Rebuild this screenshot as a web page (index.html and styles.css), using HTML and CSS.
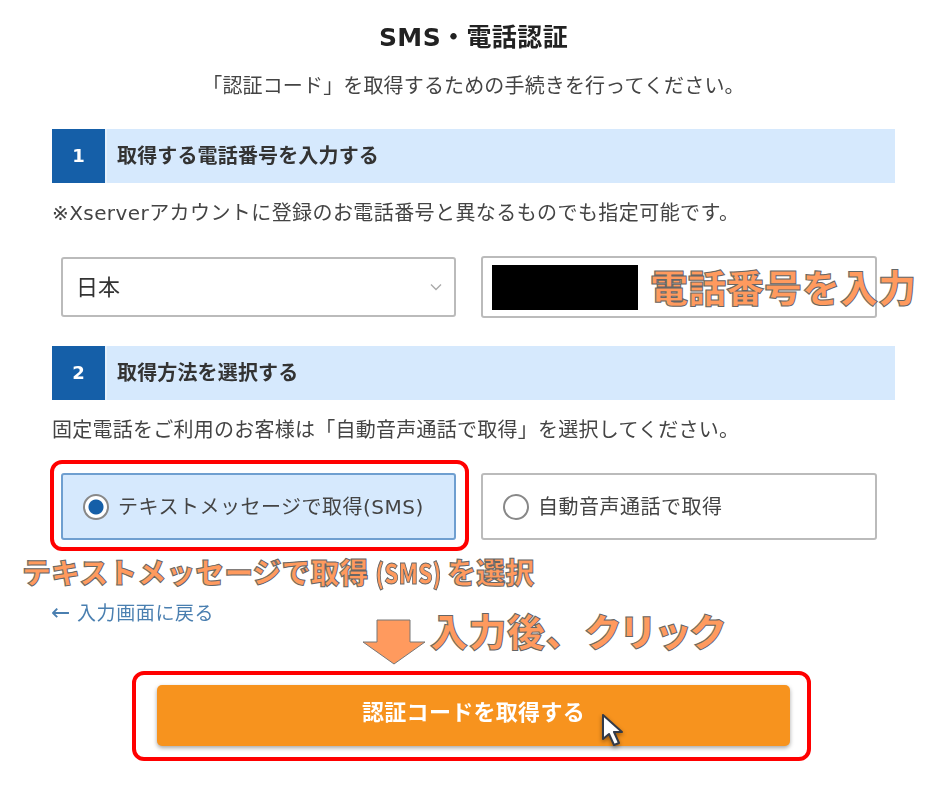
FILE: index.html
```html
<!DOCTYPE html>
<html lang="ja">
<head>
    <meta charset="UTF-8">
    <meta name="viewport" content="width=device-width, initial-scale=1.0">
    <title>SMS・電話認証</title>
    <link rel="stylesheet" href="styles.css">
</head>
<body>
    <div class="page">
        <h1>SMS・電話認証</h1>
        <p class="lead">「認証コード」を取得するための手続きを行ってください。</p>

        <div class="step-head">
            <span class="step-num">1</span>
            <span class="step-title">取得する電話番号を入力する</span>
        </div>
        <p class="note note-wide">※Xserverアカウントに登録のお電話番号と異なるものでも指定可能です。</p>

        <div class="field-row">
            <div class="select-box">
                <span class="select-text">日本</span>
                <svg class="chevron" width="12" height="8" viewBox="0 0 12 8"><path d="M1 1.5 L6 6.5 L11 1.5" fill="none" stroke="#aaa" stroke-width="1.4"/></svg>
            </div>
            <div class="phone-box"><div class="redacted"></div></div>
        </div>

        <div class="step-head">
            <span class="step-num">2</span>
            <span class="step-title">取得方法を選択する</span>
        </div>
        <p class="note">固定電話をご利用のお客様は「自動音声通話で取得」を選択してください。</p>

        <div class="radio-row">
            <div class="radio-card selected">
                <span class="radio on"></span>
                <span class="radio-label">テキストメッセージで取得(SMS)</span>
            </div>
            <div class="radio-card">
                <span class="radio"></span>
                <span class="radio-label">自動音声通話で取得</span>
            </div>
            <div class="frame frame-radio"></div>
        </div>

        <a class="back-link" href="#"><span class="back-arrow">←</span>入力画面に戻る</a>

        <div class="submit-wrap">
            <button class="submit" type="button"><span class="submit-text">認証コードを取得する</span></button>
            <div class="frame frame-submit"></div>
            <svg class="cursor" width="24" height="34" viewBox="0 0 24 34">
                <path d="M2 1 L2 25 L8 20 L13 31 L18 29 L13 18 L21 18 Z" fill="#fff" stroke="#333a48" stroke-width="2" stroke-linejoin="round"/>
            </svg>
        </div>

        <!-- annotations on top of the capture -->
        <div class="memo memo-phone">電話番号を入力</div>
        <div class="memo memo-sms">テキストメッセージで取得<span class="memo-narrow">(SMS)</span>を選択</div>
        <div class="memo memo-click">入力後、<span class="memo-kana">クリック</span></div>
        <svg class="memo-arrow" width="66" height="46" viewBox="0 0 66 46">
            <polygon points="16,1 49,1 49,23 64,23 33,45 2,23 16,23" fill="#ff9a5e" stroke="#777" stroke-width="1"/>
        </svg>
    </div>
</body>
</html>
```

FILE: styles.css
```css
body {
    margin: 0;
    background: #fff;
    color: #444;
    font-family: "DejaVu Sans", "Noto Sans CJK JP", sans-serif;
    font-size: 20px;
}
.page {
    position: relative;
    width: 843px;
    height: 790px;
    margin-left: 52px;
    padding-top: 20px;
    box-sizing: border-box;
}
/* the capture is slightly soft */
h1, .lead, .note, .step-num, .step-title, .select-text, .radio-label, .back-link, .submit-text {
    filter: blur(0.35px);
}
h1 {
    margin: 0;
    font-size: 25px;
    line-height: 36px;
    letter-spacing: 0.4px;
    text-align: center;
    color: #222;
}
.lead {
    margin: 15px 0 28px;
    line-height: 30px;
    text-align: center;
    letter-spacing: 0.15px;
}
.step-head {
    display: flex;
    align-items: center;
    height: 53.5px;
    background: #d6e9fd;
}
.step-num {
    width: 53px;
    height: 100%;
    margin-right: 10px;
    display: flex;
    align-items: center;
    justify-content: center;
    background: #155fa8;
    border-right: 2px solid #e6f1fc;
    color: #fff;
    font-size: 18px;
    font-weight: bold;
}
.step-title {
    padding-bottom: 3px;
    font-weight: bold;
    color: #333;
    letter-spacing: 0.15px;
}
.note {
    margin: 15px 0 0;
    line-height: 30px;
    letter-spacing: 0.25px;
}
.note-wide {
    letter-spacing: 0.42px;
}
.field-row {
    display: grid;
    grid-template-columns: 395px 396px;
    gap: 25px;
    margin: 28.5px 18px 28px 9px;
    height: 62px;
}
.select-box,
.phone-box {
    display: flex;
    align-items: center;
    box-sizing: border-box;
    border: 2px solid #bbb;
    border-radius: 3px;
    background: #fff;
}
.select-box {
    justify-content: space-between;
    height: 60px;
    margin-top: 1px;
    padding: 0 12px 0 13px;
    font-size: 22px;
    color: #333;
}
.select-text {
    padding-bottom: 5px;
}
.phone-box {
    padding-left: 9px;
}
.redacted {
    width: 146px;
    height: 45px;
    background: #000;
}
.radio-row {
    position: relative;
    display: grid;
    grid-template-columns: 395px 396px;
    gap: 25px;
    margin: 28.5px 18px 0 9px;
    height: 67px;
}
.radio-card {
    display: flex;
    align-items: center;
    gap: 9px;
    padding-left: 20px;
    box-sizing: border-box;
    border: 2px solid #bbb;
    border-radius: 3px;
}
.radio-card.selected {
    background: #d6e9fd;
    border-color: #6f9fd0;
}
.radio {
    width: 26px;
    height: 26px;
    box-sizing: border-box;
    border: 2px solid #888;
    border-radius: 50%;
    background: #fff;
}
.radio.on {
    background: radial-gradient(circle, #155fa8 0, #155fa8 7px, #fff 8px);
}
.radio-label {
    padding-bottom: 3px;
    letter-spacing: 0.5px;
}
.frame {
    position: absolute;
    box-sizing: border-box;
    border: 4px solid #f00;
    border-radius: 12px;
    pointer-events: none;
}
.frame-radio {
    left: -11px;
    top: -13px;
    width: 419px;
    height: 91px;
}
.back-link {
    display: block;
    margin-top: 61px;
    line-height: 24px;
    font-size: 19px;
    letter-spacing: 0.6px;
    color: #4a7fb0;
    text-decoration: none;
}
.back-arrow {
    display: inline-block;
    width: 26px;
    font-size: 23px;
    line-height: 20px;
    margin-left: -1px;
}
.submit-wrap {
    position: relative;
    margin: 60px 0 0 105px;
    width: 633px;
}
.submit {
    display: block;
    width: 100%;
    height: 61px;
    padding: 0 0 12px;
    border: none;
    border-radius: 5px;
    background: #f7931e;
    box-shadow: 0 2px 4px rgba(0, 0, 0, 0.35);
    color: #fff;
    font-family: inherit;
    font-size: 22px;
    font-weight: bold;
    letter-spacing: 0.3px;
}
.frame-submit {
    left: -25px;
    top: -14px;
    width: 679px;
    height: 90px;
}
.cursor {
    position: absolute;
    left: 444px;
    top: 29px;
    filter: drop-shadow(0 2px 2px rgba(0, 0, 0, 0.4));
}
.memo {
    position: absolute;
    white-space: nowrap;
    font-family: "Noto Sans CJK JP", sans-serif;
    font-weight: 900;
    color: #ff9a5e;
    -webkit-text-stroke: 1px #666;
}
.memo-phone {
    left: 598px;
    top: 258px;
    font-size: 38px;
    line-height: 56px;
}
.memo-sms {
    left: -30px;
    top: 554px;
    font-size: 29px;
    line-height: 34px;
}
.memo-narrow {
    display: inline-block;
    margin: 0 -2px;
    font-size: 28px;
    transform: scaleX(0.8);
}
.memo-click {
    left: 378px;
    top: 603px;
    font-size: 38px;
    line-height: 54px;
    letter-spacing: 0.5px;
}
.memo-kana {
    letter-spacing: -3px;
}
.memo-arrow {
    position: absolute;
    left: 309px;
    top: 619px;
}
```
